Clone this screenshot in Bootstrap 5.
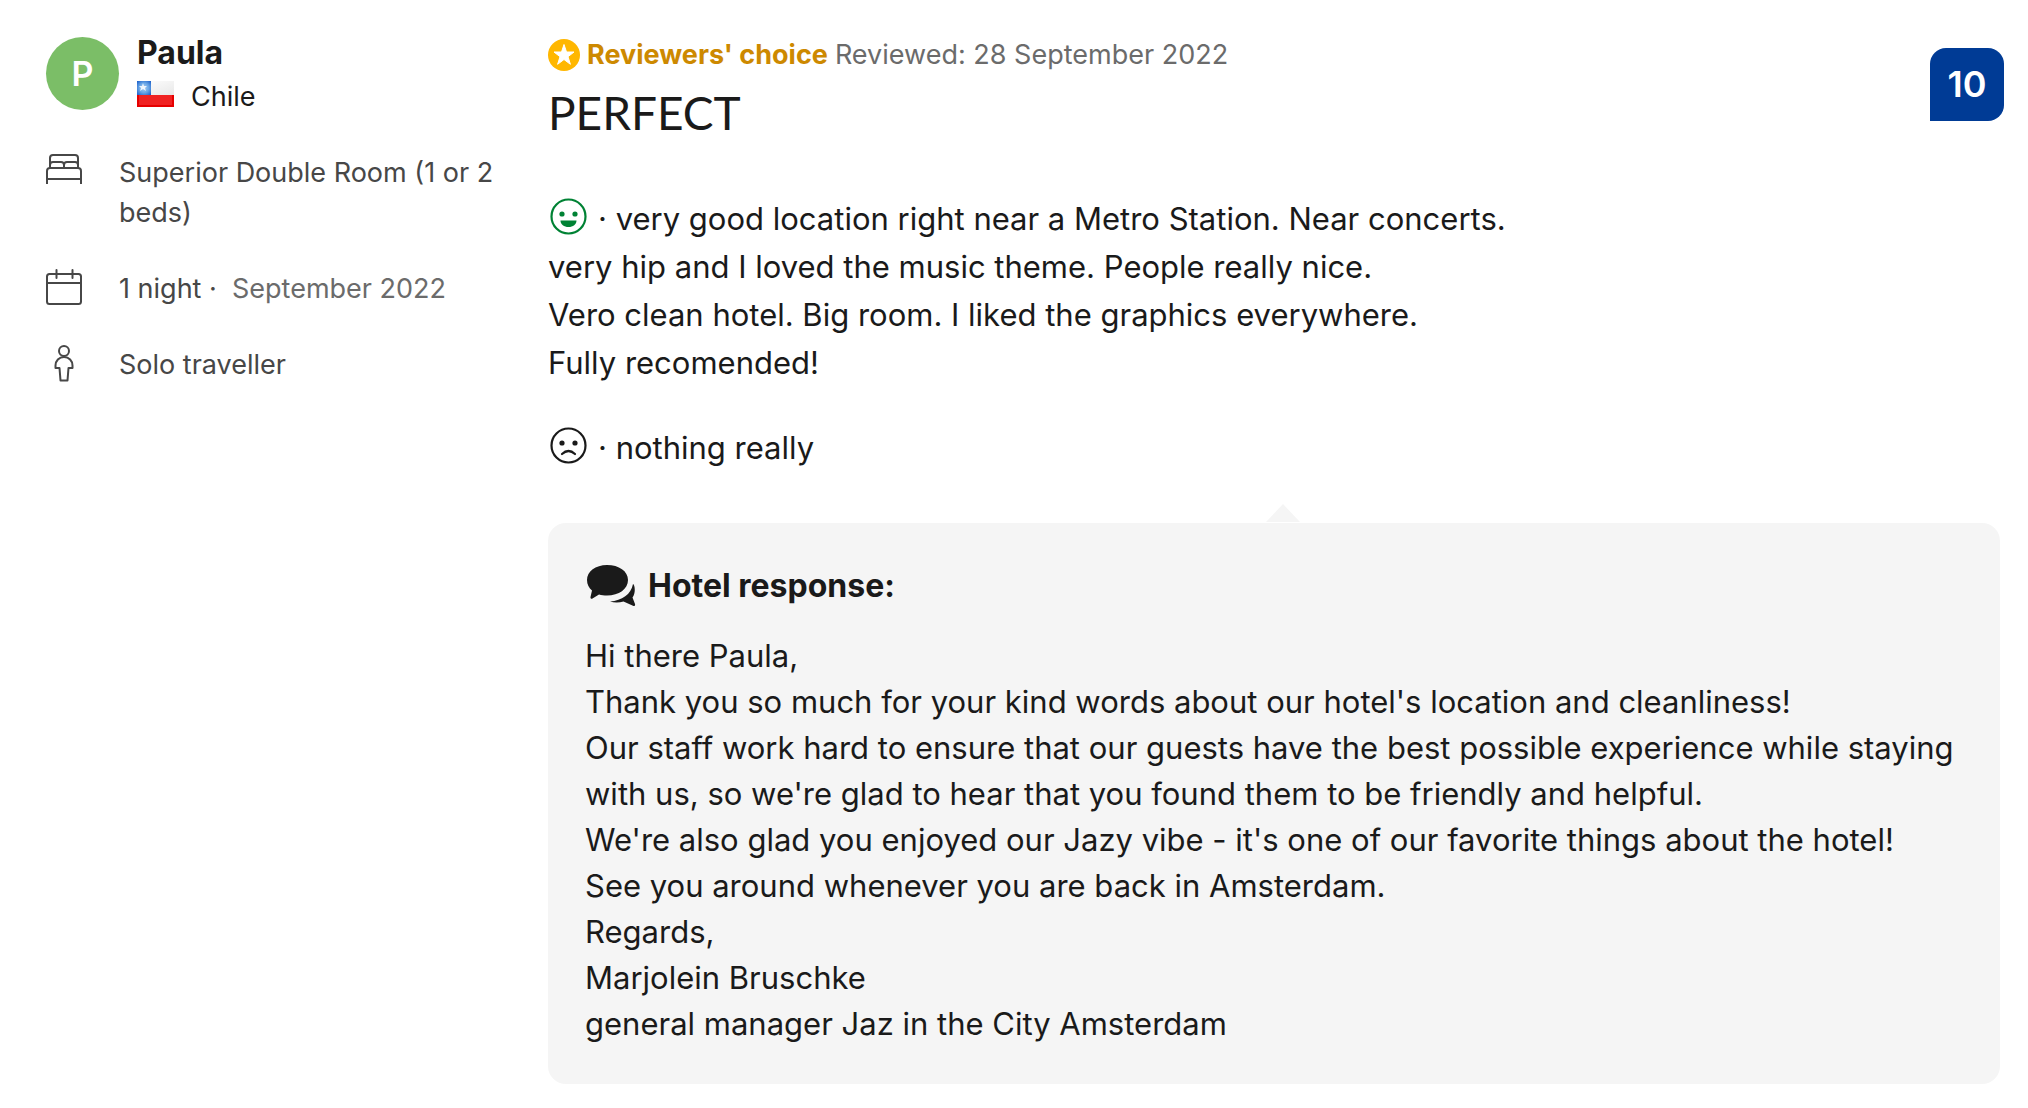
<!DOCTYPE html>
<html lang="en">
<head>
<meta charset="utf-8">
<meta name="viewport" content="width=device-width, initial-scale=1">
<title>Guest review</title>
<link rel="stylesheet" href="https://cdn.jsdelivr.net/npm/bootstrap@5.3.0/dist/css/bootstrap.min.css">
<style>
  body { font-family: Inter, "Liberation Sans", sans-serif; color: #1a1a1a; font-size: 31px; line-height: 48px; }
  .review { padding: 34px 28px 22px 46px; }
  .guest { flex: 0 0 502px; padding-right: 48px; }
  .guest-head { gap: 18px; }
  .avatar { width: 73px; height: 73px; margin-top: 3px; background: #7bbe67; color: #fff; font-size: 34px; font-weight: 600; }
  .guest-name { font-size: 32px; line-height: 38px; font-weight: 700; }
  .country { font-size: 27px; line-height: 50px; gap: 17px; }
  .country svg { margin-bottom: 6px; }
  .stay { font-size: 27px; line-height: 40px; color: #474747; gap: 36px; margin-top: 31px; }
  .stay li { display: flex; gap: 37px; }
  .stay svg { flex: none; }
  .stay time, .reviewed { color: #6b6b6b; }
  .top-line { font-size: 27px; line-height: 42px; gap: 7px; }
  .choice { color: #cd8900; font-weight: 700; }
  .headline { font-family: Lato, sans-serif; font-size: 46px; line-height: 60px; margin: 7px 0 0; font-weight: 400; }
  .score { width: 74px; height: 73px; margin: 14px -4px 0 0; background: #003b95; color: #fff; font-size: 36px; line-height: 36px; padding-bottom: 2px; font-weight: 600; border-radius: 16px 16px 16px 0; }
  .liked { margin: 52px 0 37px; }
  .disliked { margin: 0; }
  .liked svg, .disliked svg { vertical-align: top; margin: 3px 11px 0 2px; }
  .response { background: #f5f5f5; border-radius: 18px; padding: 40px 36px 37px 37px; margin-top: 51px; line-height: 46px; position: relative; }
  .response::before { content: ""; position: absolute; left: 718px; top: -19px; border: 17px solid transparent; border-top: 0; border-bottom: 18px solid #f5f5f5; }
  .response h3 { font-size: 32px; line-height: 46px; font-weight: 700; gap: 12px; margin: 0 0 24px; }
</style>
</head>
<body>
<article class="review d-flex">
  <aside class="guest">
    <div class="guest-head d-flex">
      <div class="avatar rounded-circle d-flex align-items-center justify-content-center flex-shrink-0">P</div>
      <div>
        <div class="guest-name">Paula</div>
        <div class="country d-flex align-items-center">
          <svg width="37" height="26" viewBox="0 0 37 26" role="img" aria-label="Flag of Chile">
            <defs>
              <linearGradient id="w" x1="0" y1="0" x2="1" y2="1"><stop offset="0" stop-color="#fff"/><stop offset="1" stop-color="#e8e8e8"/></linearGradient>
              <radialGradient id="b" cx=".5" cy=".5" r=".75"><stop offset="0" stop-color="#a9cdf2"/><stop offset=".45" stop-color="#6aa7e6"/><stop offset="1" stop-color="#0a50c4"/></radialGradient>
            </defs>
            <path fill="url(#w)" d="M0 0h37v14H0z"/><path fill="#e60000" d="M0 14h37v12H0z"/><path fill="#f02222" d="M2 14h33v10H2z"/><path fill="url(#b)" d="M0 0h14v14H0z"/>
            <path fill="#fff" fill-opacity=".85" d="m6 2 1 3h3L8 7l1 3-3-2-3 2 1-3-2-2h3z"/>
          </svg>
          <span>Chile</span>
        </div>
      </div>
    </div>
    <ul class="stay list-unstyled d-flex flex-column mb-0">
      <li>
        <svg width="36" height="36" viewBox="0 0 36 36" fill="none" stroke="#474747" stroke-width="2" aria-hidden="true"><path d="M1 31V18q0-3 3-3h28q3 0 3 3v13M1 26h34M4 15V5q0-3 3-3h22q3 0 3 3v10M4 12q0-3 3-3h8q3 0 3 3v3V12q0-3 3-3h8q3 0 3 3"/></svg>
        <span>Superior Double Room (1 or 2 beds)</span>
      </li>
      <li>
        <svg width="36" height="38" viewBox="0 1 36 38" fill="none" stroke="#474747" stroke-width="2" stroke-linecap="round" aria-hidden="true"><rect x="1" y="6" width="34" height="30" rx="2.5"/><path d="M1 15h34M10.500 2v8M26.500 2v8"/></svg>
        <span>1 night · &nbsp;<time datetime="2022-09">September 2022</time></span>
      </li>
      <li>
        <svg width="36" height="38" viewBox="0 1 36 38" fill="none" stroke="#474747" stroke-width="2" stroke-linejoin="round" aria-hidden="true"><circle cx="18" cy="7" r="5"/><path d="M18 13c-5 0-8.500 4-8.500 8.500V24h4l1 12.500h7l1-12.500h4v-2.500C26.500 17 23 13 18 13z"/></svg>
        <span>Solo traveller</span>
      </li>
    </ul>
  </aside>
  <main class="flex-grow-1">
    <header class="d-flex justify-content-between">
      <div>
        <div class="top-line d-flex align-items-center">
          <svg width="32" height="32" viewBox="0 0 32 32" aria-hidden="true"><circle cx="16" cy="16" r="16" fill="#ffb700"/><path fill="#fff" stroke="#fff" stroke-linejoin="round" d="m16 5.500 2.500 7.500h7.500l-6 4.700 2.400 7.600-6.400-4.800-6.400 4.800 2.400-7.600L6 13h7.500z"/></svg>
          <span class="choice">Reviewers' choice</span>
          <span class="reviewed">Reviewed: 28 September 2022</span>
        </div>
        <h2 class="headline">PERFECT</h2>
      </div>
      <div class="score d-flex align-items-center justify-content-center">10</div>
    </header>
    <p class="liked"><svg width="37" height="37" viewBox="0 0 37 37" fill="none" stroke="#008234" stroke-width="2.200" role="img" aria-label="Liked"><circle cx="18.500" cy="18.500" r="17"/><g fill="#008234" stroke="none"><circle cx="12" cy="16" r="2.600"/><circle cx="25" cy="16" r="2.600"/><path d="M10.500 22.500h16c0 4-3.500 6.500-8 6.500s-8-2.500-8-6.500z"/></g></svg>· very good location right near a Metro Station. Near concerts.<br>very hip and I loved the music theme. People really nice.<br>Vero clean hotel. Big room. I liked the graphics everywhere.<br>Fully recomended!</p>
    <p class="disliked"><svg width="37" height="37" viewBox="0 0 37 37" fill="none" stroke="#1a1a1a" stroke-width="2.200" stroke-linecap="round" role="img" aria-label="Disliked"><circle cx="18.500" cy="18.500" r="17"/><g fill="#1a1a1a" stroke="none"><circle cx="12" cy="16" r="2.600"/><circle cx="25" cy="16" r="2.600"/></g><path d="M12 27q6.500-6 13 0"/></svg>· nothing really</p>
    <section class="response">
      <h3 class="d-flex align-items-center">
        <svg width="51" height="42" viewBox="-1 0 51 42" fill="#1a1a1a" aria-hidden="true"><path d="M21 0C9.500 0 1 6.500 1 15c0 4.500 2 8 5 10.500L4.500 32c-.3 1.500.8 2.300 2 1.600l6.500-4c2.500.6 5 1 8 1 12 0 21-6.500 21-15.500S33 0 21 0z"/><path d="M47 19c1.500 0 3.300 8-.5 13.500l2.500 6.500c.4 1.500-.6 2.500-2 1.800L37.500 36.500c-4.500 1.300-9.500 1.200-13.500 0C36 35.500 45 29.500 47 19z"/></svg>
        <span>Hotel response:</span>
      </h3>
      <p class="mb-0">Hi there Paula,<br>Thank you so much for your kind words about our hotel's location and cleanliness!<br>Our staff work hard to ensure that our guests have the best possible experience while staying with us, so we're glad to hear that you found them to be friendly and helpful.<br>We're also glad you enjoyed our Jazy vibe - it's one of our favorite things about the hotel!<br>See you around whenever you are back in Amsterdam.<br>Regards,<br>Marjolein Bruschke<br>general manager Jaz in the City Amsterdam</p>
    </section>
  </main>
</article>
<script src="https://cdn.jsdelivr.net/npm/bootstrap@5.3.0/dist/js/bootstrap.bundle.min.js"></script>
</body>
</html>
